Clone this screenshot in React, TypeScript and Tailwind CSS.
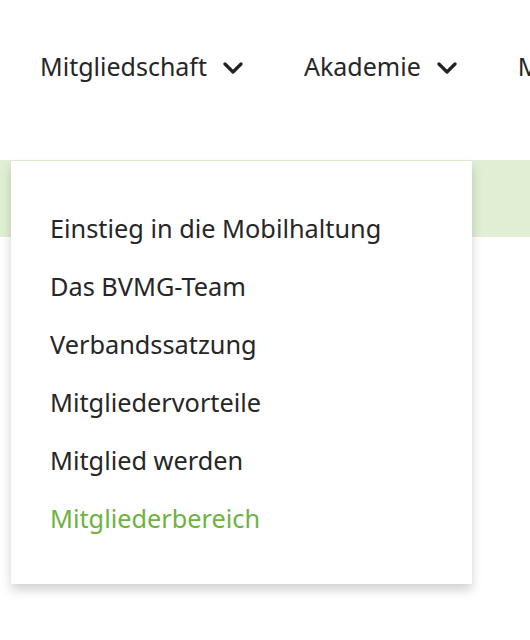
const ITEMS = [
  'Einstieg in die Mobilhaltung',
  'Das BVMG-Team',
  'Verbandssatzung',
  'Mitgliedervorteile',
  'Mitglied werden',
  'Mitgliederbereich',
];

function Chevron() {
  return (
    <svg width="20" height="12" viewBox="0 0 20 12" fill="none" className="mt-[2px]">
      <polyline points="2,2 10,10 18,2" stroke="#222" strokeWidth="3.2" strokeLinecap="round" strokeLinejoin="round" />
    </svg>
  );
}

export default function App() {
  return (
    <div className="relative h-[640px] w-[530px] overflow-hidden bg-white font-['Noto_Sans',sans-serif] text-[#262626]">
      {/* Top navigation */}
      <nav className="flex h-[134px] items-center gap-[61px] pb-[1px] pl-[40px] text-[25px] whitespace-nowrap">
        <div className="flex items-center gap-[16px]">
          <span>Mitgliedschaft</span>
          <Chevron />
        </div>
        <div className="flex items-center gap-[16px]">
          <span>Akademie</span>
          <Chevron />
        </div>
        <span>Medien</span>
      </nav>

      <div className="h-[26px]" />
      {/* Page hero band */}
      <div className="h-[77px] bg-[#e0efd4]" />

      {/* Dropdown */}
      <div className="absolute left-[11px] top-[161px] w-[461px] bg-white pt-[38px] pb-[37px] pl-[39px] shadow-[0_6px_10px_rgba(0,0,0,0.18)]">
        <ul className="flex flex-col">
          {ITEMS.map((item, i) => (
            <li
              key={item}
              className={`py-[16px] text-[25.3px] leading-[26px] ${
                i === ITEMS.length - 1 ? 'text-[#6cb33f]' : 'text-[#262626]'
              }`}
            >
              {item}
            </li>
          ))}
        </ul>
      </div>
    </div>
  );
}
